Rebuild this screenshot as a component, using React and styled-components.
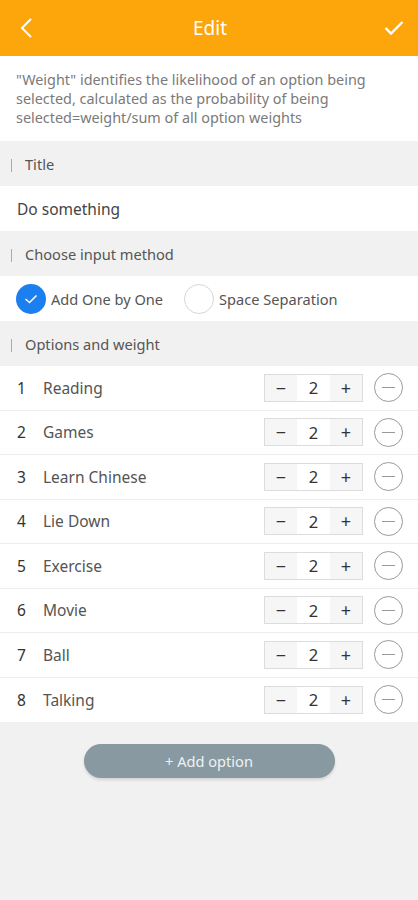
import React, { useState } from "react";
import styled, { createGlobalStyle } from "styled-components";

const GlobalStyle = createGlobalStyle`
  html, body {
    margin: 0;
    padding: 0;
    background: #f1f1f1;
    font-family: "Noto Sans", "Open Sans", sans-serif;
  }
  * { box-sizing: border-box; }
`;

const Page = styled.div`
  width: 418px;
  min-height: 900px;
  background: #f1f1f1;
`;

const Header = styled.div`
  height: 56px;
  background: #fca60b;
  display: flex;
  align-items: center;
  justify-content: space-between;
  padding: 0 12px 0 14px;
  color: #fff;
`;

const HeaderTitle = styled.div`
  font-size: 19px;
  flex: 1;
  text-align: center;
`;

const IconBtn = styled.div`
  width: 24px;
  height: 24px;
  display: flex;
  align-items: center;
  justify-content: center;
`;

const Notice = styled.div`
  background: #fff;
  padding: 14px 16px 14px;
  font-size: 14.4px;
  line-height: 19px;
  color: #7a7a7a;
`;

const SectionHead = styled.div`
  height: 45px;
  display: flex;
  align-items: center;
  padding-left: 11px;
  font-size: 14.6px;
  color: #555;

  &::before {
    content: "";
    width: 1px;
    height: 13px;
    background: #aaa;
    margin-right: 13px;
    margin-top: 3px;
  }
`;

const WhiteRow = styled.div`
  background: #fff;
  height: 45px;
  display: flex;
  align-items: center;
  padding-left: 17px;
  font-size: 15.5px;
  color: #444;
`;

const RadioRow = styled(WhiteRow)`
  padding-left: 16px;
`;

const RadioItem = styled.div`
  display: flex;
  align-items: center;
  font-size: 14.6px;
  color: #555;
  margin-right: 21px;
`;

const Circle = styled.div`
  width: 30px;
  height: 30px;
  border-radius: 50%;
  display: flex;
  align-items: center;
  justify-content: center;
  margin-right: 5px;
  background: ${(p) => (p.$on ? "#1b7ff0" : "#fff")};
  border: ${(p) => (p.$on ? "none" : "1px solid #d6d6d6")};
`;

const List = styled.div`
  background: #fff;
`;

const OptionRow = styled.div`
  height: 44.5px;
  display: flex;
  align-items: center;
  padding: 0 15px 0 17px;
  border-bottom: ${(p) => (p.$last ? "none" : "1px solid #ececec")};
`;

const Index = styled.div`
  width: 26px;
  font-size: 15.5px;
  color: #333;
`;

const Name = styled.div`
  flex: 1;
  font-size: 15.5px;
  color: #555;
`;

const Stepper = styled.div`
  display: flex;
  height: 28px;
  border: 1px solid #dcdcdc;
  margin-right: 11px;
`;

const StepCell = styled.div`
  width: ${(p) => (p.$mid ? "33px" : "32px")};
  display: flex;
  align-items: center;
  justify-content: center;
  background: ${(p) => (p.$mid ? "#fff" : "#f6f6f6")};
  font-size: ${(p) => (p.$mid ? "16.5px" : "18px")};
  color: #333;
`;

const RemoveBtn = styled.div`
  width: 29px;
  height: 29px;
  border-radius: 50%;
  border: 1px solid #999;
  display: flex;
  align-items: center;
  justify-content: center;

  &::after {
    content: "";
    width: 13px;
    height: 1px;
    background: #999;
  }
`;

const Footer = styled.div`
  display: flex;
  justify-content: center;
  padding-top: 22px;
`;

const AddButton = styled.button`
  width: 251px;
  height: 34px;
  border: none;
  border-radius: 17px;
  background: #8899a1;
  color: #eef2f4;
  font-family: "Noto Sans", sans-serif;
  font-size: 14.6px;
  box-shadow: 0 2px 3px rgba(0, 0, 0, 0.12);
`;

const options = [
  "Reading",
  "Games",
  "Learn Chinese",
  "Lie Down",
  "Exercise",
  "Movie",
  "Ball",
  "Talking",
];

export default function App() {
  const [method, setMethod] = useState(0);
  return (
    <Page>
      <GlobalStyle />
      <Header>
        <IconBtn>
          <svg width="14" height="22" viewBox="0 0 14 22" fill="none" stroke="#fff" strokeWidth="2">
            <path d="M12 2 L3 11 L12 20" />
          </svg>
        </IconBtn>
        <HeaderTitle>Edit</HeaderTitle>
        <IconBtn>
          <svg width="20" height="16" viewBox="0 0 20 16" fill="none" stroke="#fff" strokeWidth="2.4">
            <path d="M1.5 8 L7 13.5 L18.5 2" />
          </svg>
        </IconBtn>
      </Header>
      <Notice>
        "Weight" identifies the likelihood of an option being selected, calculated as the probability of being selected=weight/sum of all option weights
      </Notice>
      <SectionHead>Title</SectionHead>
      <WhiteRow>Do something</WhiteRow>
      <SectionHead>Choose input method</SectionHead>
      <RadioRow>
        {["Add One by One", "Space Separation"].map((label, i) => (
          <RadioItem key={label} onClick={() => setMethod(i)}>
            <Circle $on={method === i}>
              {method === i && (
                <svg width="14" height="10" viewBox="0 0 14 10" fill="none" stroke="#fff" strokeWidth="1.6">
                  <path d="M1.5 5 L5.5 8.5 L12.5 1.5" />
                </svg>
              )}
            </Circle>
            {label}
          </RadioItem>
        ))}
      </RadioRow>
      <SectionHead>Options and weight</SectionHead>
      <List>
        {options.map((o, i) => (
          <OptionRow key={o} $last={i === options.length - 1}>
            <Index>{i + 1}</Index>
            <Name>{o}</Name>
            <Stepper>
              <StepCell>−</StepCell>
              <StepCell $mid>2</StepCell>
              <StepCell>+</StepCell>
            </Stepper>
            <RemoveBtn />
          </OptionRow>
        ))}
      </List>
      <Footer>
        <AddButton>+ Add option</AddButton>
      </Footer>
    </Page>
  );
}
